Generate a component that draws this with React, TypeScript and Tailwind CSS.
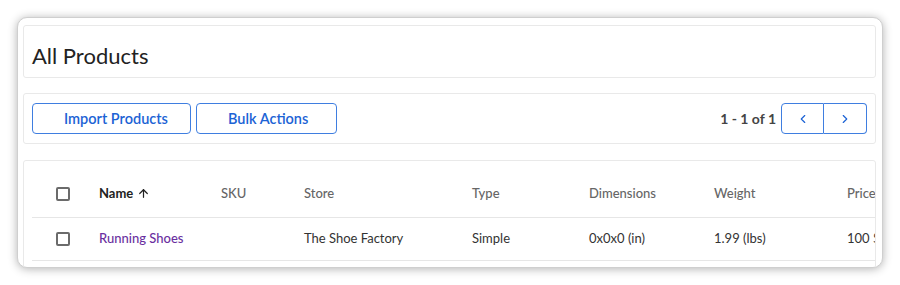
import { ArrowUp, ChevronLeft, ChevronRight } from "lucide-react";

const columns = [
  { label: "Name", width: "w-[122px]", sorted: true },
  { label: "SKU", width: "w-[83px]" },
  { label: "Store", width: "w-[168px]" },
  { label: "Type", width: "w-[117px]" },
  { label: "Dimensions", width: "w-[125px]" },
  { label: "Weight", width: "w-[133px]" },
  { label: "Price", width: "w-[100px]" },
];

const row = ["Running Shoes", "", "The Shoe Factory", "Simple", "0x0x0 (in)", "1.99 (lbs)", "100 $"];

function Checkbox() {
  return <div className="w-[14px] h-[14px] rounded-[2px] border-2 border-[#6b6b6b] bg-white" />;
}

function App() {
  return (
    <div className="w-[900px] h-[285px] bg-white pt-[17px] pl-[17px] font-['Lato',sans-serif]">
      <div className="w-[866px] h-[251px] rounded-[10px] bg-white border border-[#cfcfcf] shadow-[0_1px_10px_rgba(0,0,0,0.3)] overflow-hidden pt-[7px] pl-[5px] pr-[6px]">
        <div className="h-[53px] border border-[#e9e9e9] rounded-[3px] pl-[8px] pt-[17px]">
          <h1 className="text-[22px] leading-[26px] text-[#222]">All Products</h1>
        </div>

        <div className="mt-[15px] h-[51px] border border-[#e9e9e9] rounded-[3px] px-[8px] flex items-center justify-between">
          <div className="flex gap-[5px]">
            <button className="w-[159px] h-[31px] rounded-[4px] border border-[#3f7ee0] text-left pl-[31px] text-[14.5px] font-semibold text-[#1c63d5]">
              Import Products
            </button>
            <button className="w-[141px] h-[31px] rounded-[4px] border border-[#3f7ee0] text-left pl-[31px] text-[14.5px] font-semibold text-[#1c63d5]">
              Bulk Actions
            </button>
          </div>
          <div className="flex items-center">
            <span className="text-[14px] font-bold text-[#444] mr-[5px]">1 - 1 of 1</span>
            <button className="w-[43px] h-[31px] rounded-l-[4px] border border-[#3f7ee0] flex items-center justify-center text-[#1c63d5]">
              <ChevronLeft size={14} strokeWidth={2} />
            </button>
            <button className="w-[43px] h-[31px] rounded-r-[4px] border border-l-0 border-[#3f7ee0] flex items-center justify-center text-[#1c63d5]">
              <ChevronRight size={14} strokeWidth={2} />
            </button>
          </div>
        </div>

        <div className="mt-[16px] h-[140px] border border-[#e9e9e9] rounded-[3px] pl-[8px] pt-[9px] overflow-hidden">
          <div className="w-[950px] text-[13px]">
            <div className="h-[48px] flex items-center border-b border-[#e6e6e6]">
              <div className="w-[59px] pl-[24px]">
                <Checkbox />
              </div>
              {columns.map((c) => (
                <div
                  key={c.label}
                  className={`${c.width} px-[8px] flex items-center gap-[4px] ${
                    c.sorted ? "font-bold text-[#222]" : "font-medium text-[#666]"
                  }`}
                >
                  {c.label}
                  {c.sorted && <ArrowUp size={13} strokeWidth={2.25} />}
                </div>
              ))}
            </div>
            <div className="h-[43px] flex items-center border-b border-[#e6e6e6]">
              <div className="w-[59px] pl-[24px]">
                <Checkbox />
              </div>
              {columns.map((c, i) => (
                <div
                  key={c.label}
                  className={`${c.width} px-[8px] ${
                    i === 0 ? "text-[#6a2fa0] font-medium" : "text-[#333]"
                  }`}
                >
                  {row[i]}
                </div>
              ))}
            </div>
          </div>
        </div>
      </div>
    </div>
  );
}

export default App;
